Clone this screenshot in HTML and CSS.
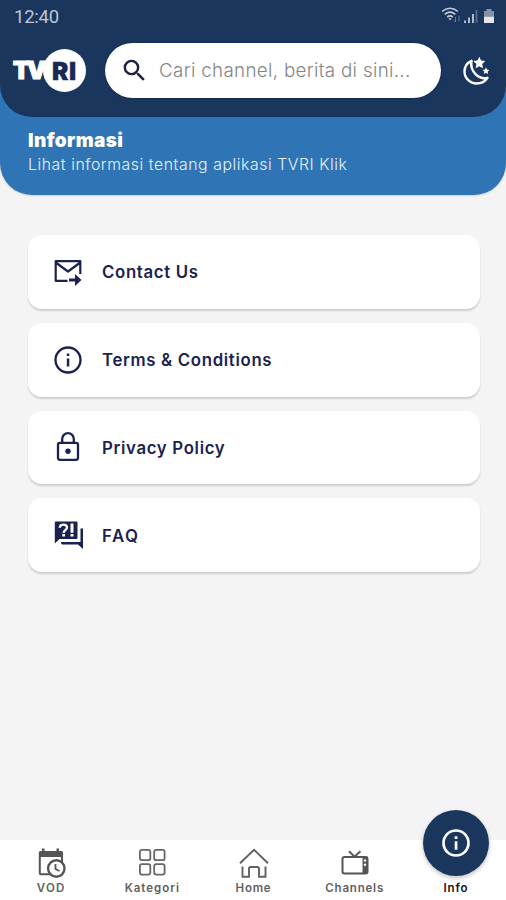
FILE: index.html
```html
<!DOCTYPE html>
<html lang="id">
<head>
<meta charset="utf-8">
<title>TVRI Klik</title>
<link rel="stylesheet" href="styles.css">
</head>
<body>
<div class="app">
  <div class="hero">
    <header class="topbar">
      <div class="status">
        <span class="clock">12:40</span>
        <svg class="status-icons" viewBox="0 0 56 20" width="56" height="20">
          <g fill="none" stroke="#c3cbda" stroke-width="1.6"><path d="M0 5.500Q8 -1 16 5.500M2.700 8.300Q8 4 13.300 8.300M5.200 11Q8 8.800 10.800 11"/></g>
          <path d="M6.300 12.200h3.400L8 14.500z" fill="#c3cbda"/>
          <path d="M13.500 11v5m-1.500-1.500 1.500 1.500M17 15v-5" stroke="#66799a" fill="none"/>
          <path d="M23 17v-2.500M27 17v-5.500M31 17V8" stroke="#c3cbda" stroke-width="1.800"/>
          <path d="M34.500 17V4" stroke="#586c90" stroke-width="1.800"/>
          <path d="M42 5h2.500V3h5v2H52v5.500H42z" fill="#8290a9"/><path d="M42 10.500h10V17H42z" fill="#e4e6ea"/>
        </svg>
      </div>
      <div class="searchrow">
        <div class="logo"><span class="logo-tv">TV</span><span class="logo-ri">RI</span></div>
        <div class="search">
          <svg viewBox="0 0 24 24" width="29" height="29"><path fill="#1c2140" d="M15.500 14h-.79l-.28-.27A6.470 6.470 0 0 0 16 9.500 6.500 6.500 0 1 0 9.500 16c1.610 0 3.090-.59 4.230-1.570l.27.28v.79l5 4.990L20.490 19zm-6 0a4.500 4.500 0 1 1 0-9 4.500 4.500 0 0 1 0 9z"/></svg>
          <span class="placeholder">Cari channel, berita di sini...</span>
        </div>
        <svg class="moon" viewBox="0 0 30 30" width="30" height="30">
          <path d="M10.500 4.800C5.500 7 3.500 11.500 3.500 15.500C3.500 22 9 27.500 15.500 27.500C20.500 27.500 24.500 25 26.500 21.800C18 24 8.500 15.500 10.500 4.800Z" fill="none" stroke="#fff" stroke-width="2.400" stroke-linejoin="round"/>
          <path d="m18.300.8 1.800 3.800 4.200.5-3.100 2.900.8 4.200-3.700-2-3.700 2 .8-4.200-3.100-2.900 4.200-.5zM25 11.400l1 2.200 2.400.3-1.700 1.600.4 2.400-2.100-1.200-2.100 1.200.4-2.400-1.700-1.600 2.400-.3z" fill="#fff"/>
        </svg>
      </div>
    </header>
    <div class="banner">
      <h1>Informasi</h1>
      <p>Lihat informasi tentang aplikasi TVRI Klik</p>
    </div>
  </div>
  <main class="list">
    <a class="card">
      <svg viewBox="0 0 32 32" width="32" height="32"><path d="M15.500 24.800H3.700V5.200h24.600V18M3.700 6.500 16 15.500 28.300 6.500" fill="none" stroke="#1a2350" stroke-width="2.200" stroke-linejoin="round"/><path d="M17 22.500h6v-4.500l6.500 6-6.500 6v-4.500h-6z" fill="#1a2350"/></svg>
      <span class="label contact">Contact Us</span>
    </a>
    <a class="card">
      <svg viewBox="0 0 32 32" width="32" height="32"><circle cx="16" cy="16" r="12.500" fill="none" stroke="#1a2350" stroke-width="2.300"/><path d="M14.800 9.500h2.500v2.500h-2.500zM14.800 14.500h2.500v8h-2.500z" fill="#1a2350"/></svg>
      <span class="label terms">Terms &amp; Conditions</span>
    </a>
    <a class="card">
      <svg viewBox="0 0 32 32" width="32" height="32"><rect x="6" y="11.800" width="20" height="17" rx="2" fill="none" stroke="#1a2350" stroke-width="2.300"/><path d="M10.200 11.500V8a5.800 5.800 0 0 1 11.600 0v3.500" fill="none" stroke="#1a2350" stroke-width="2.300"/><circle cx="16" cy="20.300" r="2.700" fill="#1a2350"/></svg>
      <span class="label privacy">Privacy Policy</span>
    </a>
    <a class="card">
      <svg viewBox="0 0 32 32" width="32" height="32"><path d="M4 2.500h20.500q1 0 1 1V19q0 1-1 1H7.500L2.800 24.500V3.500q0-1 1.200-1z" fill="#1a2350"/><path d="M28.500 9.500h2.500V30l-5-4.500H10.500q-1.500 0-1.500-2.500h19.500z" fill="#1a2350"/><path d="M7.800 8.800q0-3.200 3.600-3.200t3.600 3c0 2.600-3.400 2.600-3.400 5.400" fill="none" stroke="#fff" stroke-width="2.300"/><path d="M10.300 15h2.700v2.500h-2.700zM18.500 4.500h3v9.300h-3zM18.500 15h3v2.500h-3z" fill="#fff"/></svg>
      <span class="label faq">FAQ</span>
    </a>
  </main>
  <nav class="tabs">
    <a class="tab">
      <svg viewBox="0 0 32 32" width="32" height="32"><path d="M4.800 10v16.200q0 1 1 1H17M27 10v5" fill="none" stroke="#555" stroke-width="2"/><path d="M3.800 10V5.500q0-1.500 1.500-1.500H7V1.500h2.500V4h12V1.500H24V4h2.500Q28 4 28 5.500V10z" fill="#555"/><circle cx="21.300" cy="21.500" r="8.200" fill="#fff" stroke="#555" stroke-width="2.400"/><path d="M20.500 17v5l4 2" fill="none" stroke="#555" stroke-width="1.800"/></svg>
      <span class="vod">VOD</span>
    </a>
    <a class="tab">
      <svg viewBox="0 0 32 32" width="32" height="32" fill="none" stroke="#666" stroke-width="1.800"><rect x="3.900" y="2.800" width="10.400" height="10.400" rx="2"/><rect x="18.200" y="2.800" width="10.400" height="10.400" rx="2"/><rect x="3.900" y="17.200" width="10.400" height="10.400" rx="2"/><rect x="18.200" y="17.200" width="10.400" height="10.400" rx="2"/></svg>
      <span class="kategori">Kategori</span>
    </a>
    <a class="tab">
      <svg viewBox="0 0 32 32" width="32" height="32" fill="none" stroke="#606060" stroke-width="1.900"><path d="M3 16.300 17 2.800l14 13.500M5.500 19.500v10.200h6.500v-8q0-1.700 1.700-1.700h6.600q1.700 0 1.700 1.700v8H28.500V19.500"/></svg>
      <span class="home">Home</span>
    </a>
    <a class="tab">
      <svg viewBox="0 0 32 32" width="32" height="32"><rect x="3.500" y="10" width="25" height="16.500" rx="2" fill="none" stroke="#555" stroke-width="2"/><path d="M10 4.300 15.500 9.600l6-5.300" fill="none" stroke="#555" stroke-width="1.900"/><path d="M23.500 9.500h5v17h-5z" fill="#555"/><circle cx="26" cy="13.500" r="1.200" fill="#fff"/><circle cx="26" cy="17.700" r="1.200" fill="#fff"/></svg>
      <span class="channels">Channels</span>
    </a>
    <a class="tab active">
      <div class="bubble"><svg viewBox="0 0 32 32" width="32" height="32"><circle cx="16" cy="16" r="12.500" fill="none" stroke="#fff" stroke-width="2.700"/><path d="M14.700 9.300h2.700V12h-2.700zM14.700 14.200h2.700v8.500h-2.700z" fill="#fff"/></svg></div>
      <span class="info">Info</span>
    </a>
  </nav>
</div>
</body>
</html>
```
FILE: styles.css
```css
* { box-sizing: border-box; }
body { margin: 0; font-family: "Inter", "Open Sans", sans-serif; }
.app { width: 506px; height: 900px; background: #f4f4f4; display: flex; flex-direction: column; overflow: hidden; }
.hero { height: 195px; background: #2f75b6; border-radius: 0 0 32px 32px; box-shadow: 0 1px 2px rgba(0,0,0,.15); }
.topbar { height: 117px; background: #1b365d; border-radius: 0 0 32px 32px; }
.status { height: 43px; padding: 6px 8px 0 14px; display: flex; justify-content: space-between; }
.clock { font: 18.500px/22px Roboto, sans-serif; color: #bec6d4; letter-spacing: -.25px; }
.searchrow { display: flex; align-items: center; height: 55px; padding-left: 13px; }
.logo { display: flex; align-items: center; width: 92px; font-weight: 900; }
.logo-tv { width: 30px; font-size: 24px; line-height: 30px; letter-spacing: -2.500px; color: #fff; -webkit-text-stroke: 1.200px #fff; white-space: nowrap; }
.logo-ri { width: 43px; height: 43px; border-radius: 50%; background: #fff; color: #1a2858; display: flex; align-items: center; justify-content: center; font-size: 24.500px; letter-spacing: .8px; -webkit-text-stroke: .4px #1a2858; }
.search { width: 336px; height: 55px; border-radius: 28px; background: #fff; box-shadow: 0 0 2px #071747; display: flex; align-items: center; padding-left: 15px; }
.placeholder { margin-left: 10px; color: #858585; font-size: 18.800px; font-weight: 300; letter-spacing: .32px; white-space: nowrap; }
.moon { margin-left: 20px; }
.banner { padding: 12px 28px 0; color: #fff; }
.banner h1 { margin: 0; font-size: 19px; line-height: 24px; font-weight: 900; letter-spacing: .4px; }
.banner p { margin: 2px 0 0; font-size: 15.800px; line-height: 20px; font-weight: 300; letter-spacing: .57px; color: #e6f1fb; white-space: nowrap; }
.list { flex: 1; padding: 40px 26px 0 28px; display: flex; flex-direction: column; gap: 14px; }
.card { height: 73.800px; border-radius: 14px; background: #fff; box-shadow: 0 2px 2px rgba(0,0,0,.16); display: flex; align-items: center; padding-left: 24px; }
.label { margin: 1px 0 0 18px; font-size: 16.800px; font-weight: 600; letter-spacing: .67px; color: #1a2350; white-space: nowrap; }
.faq { letter-spacing: 1.600px; }
.tabs { height: 60px; background: #fff; display: grid; grid-template-columns: repeat(5, 1fr); }
.tab { display: flex; flex-direction: column; align-items: center; padding: 7px 0 0 1px; font-size: 11.500px; line-height: 16px; font-weight: 600; letter-spacing: .8px; color: #606060; }
.tab > svg { flex: none; }
.tab > span { margin-top: 1px; }
.vod { letter-spacing: 1.200px; }
.kategori { letter-spacing: 1px; }
.active { color: #111; }
.bubble { width: 66px; height: 66px; margin-top: -37px; margin-bottom: 3px; flex: none; border-radius: 50%; background: #1b365d; box-shadow: 0 2px 4px rgba(0,0,0,.25); display: flex; align-items: center; justify-content: center; }
```
